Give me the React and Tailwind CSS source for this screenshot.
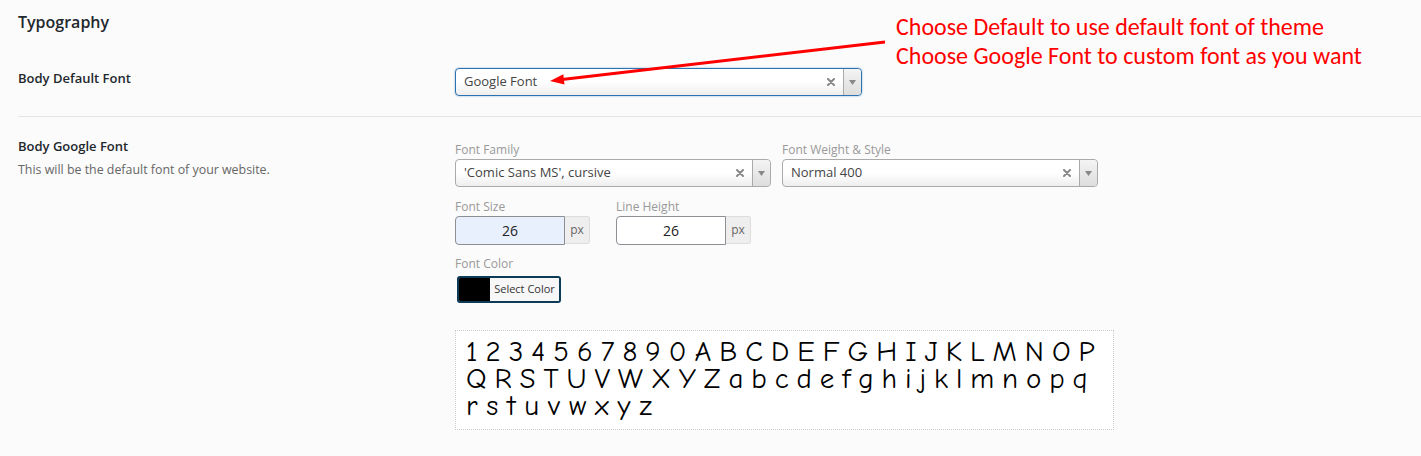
import React from 'react';

const uiFont = { fontFamily: '"Segoe UI", "Open Sans", sans-serif' };

const ClearIcon = () => (
  <svg width="8" height="8" viewBox="0 0 8 8" className="mr-[8px]">
    <path d="M1 1 L7 7 M7 1 L1 7" stroke="#888888" strokeWidth="2" strokeLinecap="round" />
  </svg>
);

const Select = ({ value, width, focused }) => (
  <div
    className={`flex items-stretch h-[28px] rounded-[4px] border bg-gradient-to-b from-white from-50% to-[#eeeeee] ${
      focused ? 'border-[#2a73b0] shadow-[0_0_2px_rgba(42,115,176,0.6)]' : 'border-[#aaaaaa]'
    } ${width}`}
  >
    <div className="flex-1 flex items-center pl-[8px] text-[13px] text-[#444444] truncate">{value}</div>
    <div className="flex items-center">
      <ClearIcon />
    </div>
    <div className="w-[18px] flex items-center justify-center border-l border-[#aaaaaa] rounded-r-[4px] bg-gradient-to-b from-[#f4f4f4] to-[#dddddd]">
      <svg width="7" height="5" viewBox="0 0 7 5">
        <polygon points="0,0 7,0 3.5,5" fill="#888888" />
      </svg>
    </div>
  </div>
);

const FieldLabel = ({ children }) => (
  <div className="text-[12px] leading-[16px] h-[17px] text-[#999999]">{children}</div>
);

const PxInput = ({ value, bg }) => (
  <div className="flex">
    <div className={`w-[110px] h-[29px] flex items-center justify-center rounded-l-[4px] border border-[#8c8f94] text-[14px] text-[#222222] ${bg}`}>
      {value}
    </div>
    <div className="w-[25px] h-[28px] flex items-center justify-center rounded-r-[3px] border border-l-0 border-[#dddddd] bg-[#eeeeee] text-[12px] text-[#666666]">
      px
    </div>
  </div>
);

const previewLines = [
  { chars: '1234567890ABCDEFGHIJKLMNOP', w: 'w-[629px]' },
  { chars: 'QRSTUVWXYZabcdefghijklmnopq', w: 'w-[622px]' },
  { chars: 'rstuvwxyz', w: 'w-[186px]' },
];

export default function App() {
  return (
    <div className="relative h-[456px] bg-[#fbfbfb] pl-[18px] overflow-hidden" style={uiFont}>
      <h2 className="pt-[12px] text-[16px] leading-[20px] font-semibold text-[#23282d]">Typography</h2>

      <div className="flex pt-[36px] pb-[20px] border-b border-[#e5e5e5]">
        <div className="w-[437px] text-[13px] leading-[20px] font-semibold text-[#23282d]">Body Default Font</div>
        <Select value="Google Font" width="w-[407px]" focused />
      </div>

      <div className="flex">
        <div className="w-[437px] pt-[19px]">
          <div className="text-[13px] leading-[20px] font-semibold text-[#23282d]">Body Google Font</div>
          <div className="mt-[5px] text-[12.4px] leading-[18px] text-[#666666]">This will be the default font of your website.</div>
        </div>

        <div className="pt-[25px]">
          <div className="flex gap-[11px]">
            <div>
              <FieldLabel>Font Family</FieldLabel>
              <Select value="'Comic Sans MS', cursive" width="w-[316px]" />
            </div>
            <div>
              <FieldLabel>Font Weight &amp; Style</FieldLabel>
              <Select value="Normal 400" width="w-[316px]" />
            </div>
          </div>

          <div className="flex gap-[26px] mt-[12px]">
            <div>
              <FieldLabel>Font Size</FieldLabel>
              <PxInput value="26" bg="bg-[#e8f0fe]" />
            </div>
            <div>
              <FieldLabel>Line Height</FieldLabel>
              <PxInput value="26" bg="bg-white" />
            </div>
          </div>

          <div className="mt-[11px]">
            <div className="text-[12px] leading-[16px] text-[#999999]">Font Color</div>
            <div className="ml-[2px] mt-[4px] w-[104px] h-[27px] flex rounded-[3px] border-2 border-[#0c3a57] overflow-hidden">
              <div className="w-[31px] bg-black" />
              <div className="flex-1 flex items-center justify-center bg-[#f7f7f7] text-[11px] text-[#333333]">Select Color</div>
            </div>
          </div>

          <div
            className="mt-[27px] w-[659px] h-[100px] border border-dotted border-[#cccccc] bg-white pl-[10px] pt-[7px] text-[29px] leading-[27px] text-black"
            style={{ fontFamily: '"Comic Sans MS", "Comic Neue", "DejaVu Sans", sans-serif' }}
          >
            {previewLines.map((line, i) => (
              <div key={i} className={`flex justify-between ${line.w}`}>
                {line.chars.split('').map((c, j) => (
                  <span key={j}>{c}</span>
                ))}
              </div>
            ))}
          </div>
        </div>
      </div>

      {/* annotation */}
      <div
        className="absolute left-[896px] top-[12px] text-[24px] leading-[29px] text-[#ff0000]"
        style={{ fontFamily: 'Carlito, Calibri, "Liberation Sans", sans-serif' }}
      >
        <div>Choose Default to use default font of theme</div>
        <div>Choose Google Font to custom font as you want</div>
      </div>
      <svg className="absolute left-0 top-0 pointer-events-none" width="1421" height="456">
        <line x1="885" y1="42" x2="562" y2="79.6" stroke="#ff0000" strokeWidth="3" />
        <polygon points="550,81 564.5,84.6 563.3,74.3" fill="#ff0000" />
      </svg>
    </div>
  );
}
